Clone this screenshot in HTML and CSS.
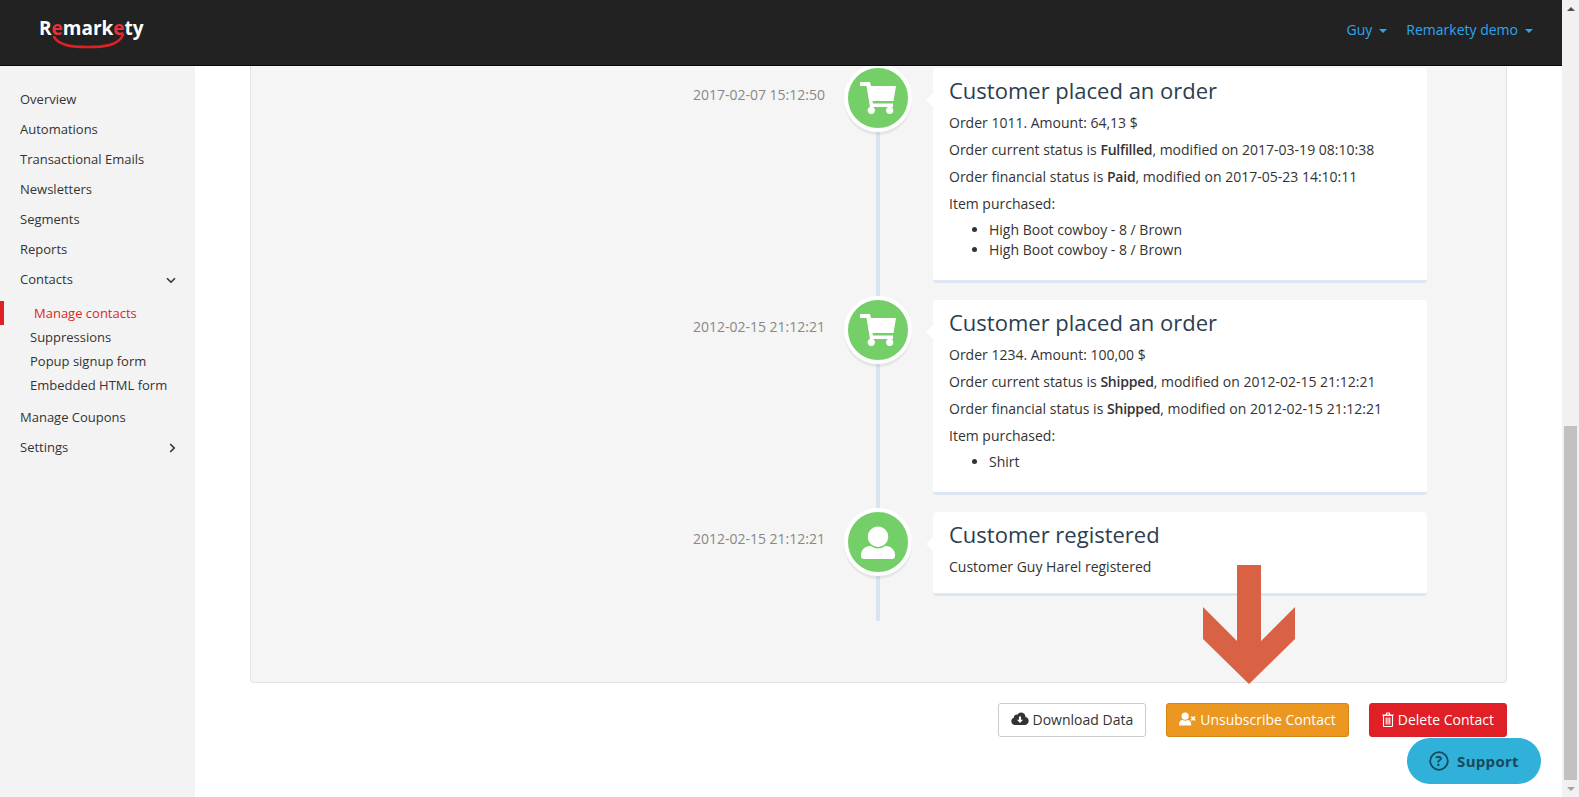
FILE: index.html
```html
<!DOCTYPE html>
<html lang="en">
<head>
<meta charset="utf-8">
<title>Remarkety - Contact</title>
<link rel="stylesheet" href="styles.css">
</head>
<body>
<div class="window">
  <div class="app">
    <header class="topbar">
      <a class="logo"><span class="logo-text">R<span class="logo-e">e</span>mark<span class="logo-e">e</span>ty</span>
        <svg class="logo-smile" viewBox="0 0 72 16" width="72" height="16"><path d="M1 3C6 12 20 13 35 13C50 13 65 12 70 1" fill="none" stroke="#e01f26" stroke-width="2.6" stroke-linecap="round"/></svg>
      </a>
      <nav class="usernav">
        <a class="usernav-item">Guy<i class="caret"></i></a>
        <a class="usernav-item">Remarkety demo<i class="caret"></i></a>
      </nav>
    </header>
    <div class="body">
      <aside class="sidebar">
        <ul class="menu">
          <li>Overview</li>
          <li>Automations</li>
          <li>Transactional Emails</li>
          <li>Newsletters</li>
          <li>Segments</li>
          <li>Reports</li>
          <li class="has-chevron">Contacts
            <svg class="chev" width="10" height="7" viewBox="0 0 10 7"><path d="M1 1.200l4 4 4-4" fill="none" stroke="#333" stroke-width="1.600"/></svg>
          </li>
        </ul>
        <ul class="submenu">
          <li class="active">Manage contacts</li>
          <li>Suppressions</li>
          <li>Popup signup form</li>
          <li>Embedded HTML form</li>
        </ul>
        <ul class="menu">
          <li>Manage Coupons</li>
          <li class="has-chevron">Settings
            <svg class="chev chev-r" width="7" height="10" viewBox="0 0 7 10"><path d="M1.200 1l4 4-4 4" fill="none" stroke="#333" stroke-width="1.600"/></svg>
          </li>
        </ul>
      </aside>
      <main class="content">
        <section class="panel">
          <div class="timeline">
            <article class="event">
              <time class="event-date">2017-02-07 15:12:50</time>
              <div class="event-badge"><svg viewBox="0 0 36 32" width="36" height="32"><use href="#cart"/></svg></div>
              <div class="card">
                <h3>Customer placed an order</h3>
                <p>Order 1011. Amount: 64,13 $</p>
                <p>Order current status is <b>Fulfilled</b>, modified on 2017-03-19 08:10:38</p>
                <p>Order financial status is <b>Paid</b>, modified on 2017-05-23 14:10:11</p>
                <p>Item purchased:</p>
                <ul><li>High Boot cowboy - 8 / Brown</li><li>High Boot cowboy - 8 / Brown</li></ul>
              </div>
            </article>
            <article class="event">
              <time class="event-date">2012-02-15 21:12:21</time>
              <div class="event-badge"><svg viewBox="0 0 36 32" width="36" height="32"><use href="#cart"/></svg></div>
              <div class="card">
                <h3>Customer placed an order</h3>
                <p>Order 1234. Amount: 100,00 $</p>
                <p>Order current status is <b>Shipped</b>, modified on 2012-02-15 21:12:21</p>
                <p>Order financial status is <b>Shipped</b>, modified on 2012-02-15 21:12:21</p>
                <p>Item purchased:</p>
                <ul><li>Shirt</li></ul>
              </div>
            </article>
            <article class="event">
              <time class="event-date">2012-02-15 21:12:21</time>
              <div class="event-badge"><svg viewBox="0 0 34 33" width="34" height="33"><path d="M0 29C0 24 4 20 9 20H25C30 20 34 24 34 29V30Q34 33 31 33H3Q0 33 0 30Z" fill="#fff"/><circle cx="17" cy="10.800" r="11" fill="#fff" stroke="#75cf68" stroke-width="1.500"/></svg></div>
              <div class="card card-last">
                <h3>Customer registered</h3>
                <p>Customer Guy Harel registered</p>
              </div>
            </article>
          </div>
        </section>
        <div class="actions">
          <button class="btn btn-default"><svg width="18" height="14" viewBox="0 0 18 14"><path d="M4.200 13C2 13 .3 11.400 .3 9.300c0-1.700 1-3 2.500-3.500C3 3.500 4.700 2.300 6.500 2.700 7.400 1.200 8.900.4 10.500.6c2.300.2 3.900 2 4 4.300 1.900.4 3.200 1.900 3.200 3.900 0 2.400-1.800 4.200-4.200 4.200z" fill="#333"/><path d="M8 4.500h2v3.300h2.100L9 11 5.900 7.800H8z" fill="#fff"/></svg>Download Data</button>
          <button class="btn btn-warning"><svg width="17" height="14" viewBox="0 0 18 14"><circle cx="6.500" cy="4" r="3.800" fill="#fff"/><path d="M0 13c0-3 1.500-5 4-5 1.500 1 3.500 1 5 0 2.500 0 4 2 4 5 0 .6-.4 1-1 1H1c-.6 0-1-.4-1-1z" fill="#fff"/><path d="M13 4.500l4 4M17 4.500l-4 4" stroke="#fff" stroke-width="1.800"/></svg>Unsubscribe Contact</button>
          <button class="btn btn-danger"><svg width="12" height="15" viewBox="0 0 12 15"><path d="M1.500 3.500h9v10.300c0 .4-.3.700-.7.700H2.200c-.4 0-.7-.3-.7-.7zM.3 3h11.400M4 3l.7-2h2.600L8 3M4.200 5.500v7M6 5.500v7M7.800 5.500v7" fill="none" stroke="#fff" stroke-width="1.100"/></svg>Delete Contact</button>
        </div>
      </main>
    </div>
    <svg class="arrow" width="92" height="120" viewBox="0 0 92 120"><path d="M34 0H58V76L92 42V74L46 119L0 74V42L34 76Z" fill="#d96245"/></svg>
    <a class="support"><svg width="20" height="20" viewBox="0 0 20 20"><circle cx="10" cy="10" r="8.800" fill="none" stroke="#16485e" stroke-width="1.800"/><text x="10" y="15" text-anchor="middle" class="support-q">?</text></svg>Support</a>
  </div>
  <div class="scrollbar">
    <div class="scroll-btn"><i class="tri-up"></i></div>
    <div class="scroll-track"><div class="scroll-thumb"></div></div>
    <div class="scroll-btn"><i class="tri-down"></i></div>
  </div>
</div>
<svg class="defs" width="0" height="0"><defs><g id="cart" fill="#fff"><path d="M0 0H10L11 4H36L33.500 19H12.500L13 21.500H33V25H10L6.500 4H0Z"/><circle cx="11.300" cy="28.300" r="3.600"/><circle cx="29.700" cy="28.300" r="3.600"/></g></defs></svg>
</body>
</html>
```
FILE: styles.css
```css
* { box-sizing: border-box; }
html, body { margin: 0; height: 100%; overflow: hidden; }
body { font-family: "Open Sans", "Noto Sans", sans-serif; font-size: 14px; color: #333; background: #fff; }
.window { display: flex; width: 1579px; height: 797px; }
.app { position: relative; flex: 1; min-width: 0; display: flex; flex-direction: column; }
.topbar { flex: none; height: 66px; background: #222; border-bottom: 1px solid #080808; display: flex; align-items: center; justify-content: space-between; padding: 0 29px 0 39px; position: relative; z-index: 2; }
.logo { position: relative; display: block; color: #fff; margin-top: -10px; }
.logo-text { font-size: 19px; font-weight: 700; }
.logo-e { color: #e8303a; }
.logo-smile { position: absolute; left: 14px; top: 19px; }
.usernav { display: flex; gap: 19px; margin-top: -7px; }
.usernav-item { color: #2ea5f0; font-size: 14px; }
.caret { display: inline-block; width: 0; height: 0; margin-left: 7px; vertical-align: middle; border-top: 4px solid; border-left: 4px solid transparent; border-right: 4px solid transparent; }
.body { flex: 1; min-height: 0; display: flex; }
.sidebar { flex: none; width: 195px; background: #f3f3f3; padding-top: 18px; font-size: 13px; }
.menu, .submenu { list-style: none; margin: 0; padding: 0; }
.menu li { height: 30px; line-height: 30px; padding-left: 20px; position: relative; }
.submenu { margin: 7px 0 5px; }
.submenu li { height: 24px; line-height: 24px; padding-left: 30px; }
.submenu .active { color: #e01f26; border-left: 4px solid #e01f26; }
.chev { position: absolute; left: 166px; top: 13px; }
.chev-r { left: 169px; top: 11px; }
.content { flex: 1; min-width: 0; padding: 0 55px; overflow: hidden; }
.panel { height: 617px; background: #f5f5f5; border: 1px solid #e3e3e3; border-top: 0; border-radius: 0 0 4px 4px; }
.timeline { position: relative; padding-top: 2px; height: 555px; }
.timeline::before { content: ""; position: absolute; left: 625px; top: 0; bottom: 0; width: 4px; background: #d8e4ef; }
.event { position: relative; margin-bottom: 17px; padding-left: 682px; padding-right: 79px; }
.event-date { position: absolute; left: 0; width: 574px; top: 17px; text-align: right; font-size: 14px; color: #888; }
.event-badge { position: absolute; left: 593px; top: -4px; width: 68px; height: 68px; border-radius: 50%; background: #75cf68; border: 4px solid #fff; box-shadow: 0 3px 0 rgba(0,0,0,.06); display: flex; align-items: center; justify-content: center; }
.card { position: relative; background: #fff; border-bottom: 3px solid #dbe6f0; border-radius: 4px; padding: 7px 16px 10px; }
.card::before { content: ""; position: absolute; left: -7px; top: 25px; width: 14px; height: 14px; background: #fff; transform: rotate(45deg) scale(.7); }
.card h3 { margin: 0 0 8px; font-size: 22px; font-weight: 400; line-height: 30px; color: #2c3e50; }
.card p { margin: 0 0 7px; line-height: 20px; font-size: 14px; }
.card b { font-weight: 600; letter-spacing: -.2px; }
.card ul { margin: -1px 0 10px; padding-left: 40px; line-height: 20px; }
.card-last { padding-bottom: 9px; }
.actions { display: flex; justify-content: flex-end; gap: 20px; margin-top: 20px; }
.btn { height: 34px; border-radius: 3px; padding: 0 12px 2px; font: 14px "Open Sans", "Noto Sans", sans-serif; display: inline-flex; align-items: center; gap: 4px; border: 1px solid; }
.btn-default { background: #fff; border-color: #ccc; color: #333; }
.btn-warning { background: #ec971f; border-color: #d58512; color: #fff; }
.btn-danger { background: #e01f26; border-color: #d2232a; color: #fff; }
.arrow { position: absolute; left: 1203px; top: 565px; z-index: 1; }
.support { position: absolute; left: 1407px; top: 738px; width: 134px; height: 46px; border-radius: 23px; background: #30b1d9; color: #16485e; font-weight: 700; font-size: 15px; letter-spacing: .3px; display: flex; align-items: center; justify-content: center; gap: 8px; z-index: 3; }
.support-q { font-size: 14px; font-weight: 700; fill: #16485e; }
.scrollbar { flex: none; width: 17px; background: #f1f1f1; display: flex; flex-direction: column; }
.scroll-btn { flex: none; height: 17px; display: flex; align-items: center; justify-content: center; }
.tri-up, .tri-down { width: 0; height: 0; border-left: 4px solid transparent; border-right: 4px solid transparent; }
.tri-up { border-bottom: 4px solid #505050; }
.tri-down { border-top: 4px solid #a3a3a3; }
.scroll-track { flex: 1; display: flex; flex-direction: column; justify-content: flex-end; }
.scroll-thumb { height: 354px; margin: 0 2px; background: #c1c1c1; }
.defs { position: absolute; }
```
